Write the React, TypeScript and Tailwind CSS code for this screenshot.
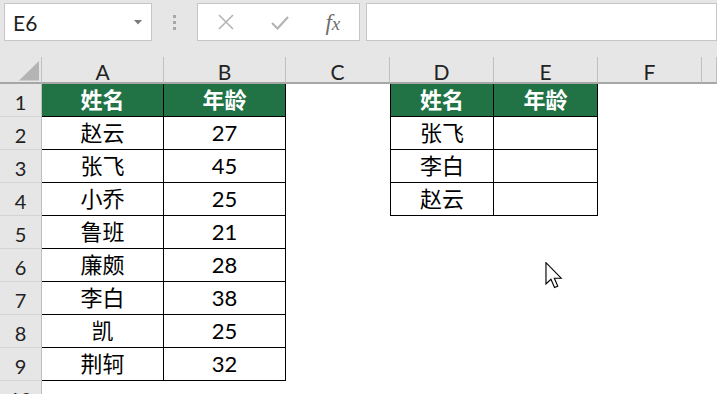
import React from "react";

const colA = ["姓名", "赵云", "张飞", "小乔", "鲁班", "廉颇", "李白", "凯", "荆轲"];
const colB = ["年龄", "27", "45", "25", "21", "28", "38", "25", "32"];
const colD = ["姓名", "张飞", "李白", "赵云"];

const letters = ["A", "B", "C", "D", "E", "F", ""];

function Cursor() {
  return (
    <svg width="19" height="27" viewBox="0 0 13 19" className="absolute left-[545px] top-[262px]">
      <path
        d="M0.5 0.5 L0.5 15.5 L4 12.2 L6.5 18 L8.8 17 L6.4 11.4 L11.2 11.4 Z"
        fill="#ffffff"
        stroke="#000000"
        strokeWidth="0.8"
        strokeLinejoin="miter"
      />
    </svg>
  );
}

export default function App() {
  const rows = Array.from({ length: 10 }, (_, i) => i + 1);
  return (
    <div className="relative w-[717px] h-[394px] overflow-hidden bg-white font-['Lato','Noto_Sans_CJK_SC',sans-serif] text-[#222]">
      {/* toolbar */}
      <div className="h-[57px] bg-[#e6e6e6] flex items-start pt-[3px] pl-[4px]">
        <div className="w-[151px] h-[38px] bg-white border border-[#c6c6c6] flex items-center justify-between pl-[8px] pr-[9px]">
          <span className="text-[21px] leading-none text-[#222]">E6</span>
          <svg width="8" height="5" viewBox="0 0 8 5">
            <path d="M0 0 L8 0 L4 4.5 Z" fill="#7a7a7a" />
          </svg>
        </div>
        <div className="w-[46px] h-[38px] flex flex-col items-center justify-center gap-[3px]">
          <div className="w-[3px] h-[3px] bg-[#a8a8a8]" />
          <div className="w-[3px] h-[3px] bg-[#a8a8a8]" />
          <div className="w-[3px] h-[3px] bg-[#a8a8a8]" />
        </div>
        <div className="w-[163px] h-[38px] bg-white border border-[#c6c6c6] flex items-center">
          <div className="w-[55px] flex justify-center pl-[1px]">
            <svg width="16" height="16" viewBox="0 0 16 16">
              <path d="M1 1 L15 15 M15 1 L1 15" stroke="#b4b4b4" strokeWidth="1.6" />
            </svg>
          </div>
          <div className="w-[55px] flex justify-center">
            <svg width="18" height="15" viewBox="0 0 18 15">
              <path d="M1 8 L6.5 13.5 L17 2" stroke="#b4b4b4" strokeWidth="2.2" fill="none" />
            </svg>
          </div>
          <div className="w-[52px] flex justify-center">
            <span className="font-['Liberation_Serif',serif] italic text-[23px] leading-none text-[#6e6e6e]">
              f<span className="text-[19px]">x</span>
            </span>
          </div>
        </div>
        <div className="ml-[6px] w-[360px] h-[38px] bg-white border border-[#c6c6c6]" />
      </div>

      {/* sheet grid */}
      <div className="grid grid-cols-[42px_122px_122px_104px_104px_104px_104px_1fr] grid-rows-[27px_repeat(10,33px)]">
        {/* corner */}
        <div className="bg-[#e6e6e6] border-b-2 border-b-[#a6a6a6] border-r border-r-[#c0c0c0] relative">
          <svg width="42" height="27" viewBox="0 0 42 27" className="absolute left-0 top-0">
            <path d="M39 4 L39 23.5 L19 23.5 Z" fill="#b4b4b4" />
          </svg>
        </div>
        {letters.map((l, i) => (
          <div
            key={"h" + i}
            className="bg-[#e6e6e6] border-b-2 border-b-[#a6a6a6] border-r border-r-[#c0c0c0] flex items-center justify-center pt-[3px] text-[21px] leading-none text-[#222]"
          >
            {l}
          </div>
        ))}

        {rows.map((r) => {
          const idx = r - 1;
          const inAB = r <= 9;
          const inDE = r <= 4;
          const header = r === 1;
          const tableCell = (content: string, extra: string, key: string, bold: boolean) => (
            <div
              key={key}
              className={
                "flex items-center justify-center text-[22px] leading-none border-b border-r border-black " +
                (bold ? "bg-[#217346] text-white font-bold " : "bg-white text-black ") +
                extra
              }
            >
              {content}
            </div>
          );
          return (
            <React.Fragment key={"r" + r}>
              <div className="bg-[#e6e6e6] border-b border-b-[#d4d4d4] border-r border-r-[#bdbdbd] flex items-center justify-center pt-[3px] text-[20px] leading-none text-[#222]">
                {r}
              </div>
              {inAB ? tableCell(colA[idx], "", "a" + r, header) : <div className="bg-white" />}
              {inAB ? tableCell(colB[idx], "", "b" + r, header) : <div className="bg-white" />}
              <div className="bg-white" />
              {inDE ? tableCell(colD[idx], "border-l", "d" + r, header) : <div className="bg-white" />}
              {inDE ? tableCell(header ? "年龄" : "", "", "e" + r, header) : <div className="bg-white" />}
              <div className="bg-white" />
              <div className="bg-white" />
            </React.Fragment>
          );
        })}
      </div>

      <Cursor />
    </div>
  );
}
